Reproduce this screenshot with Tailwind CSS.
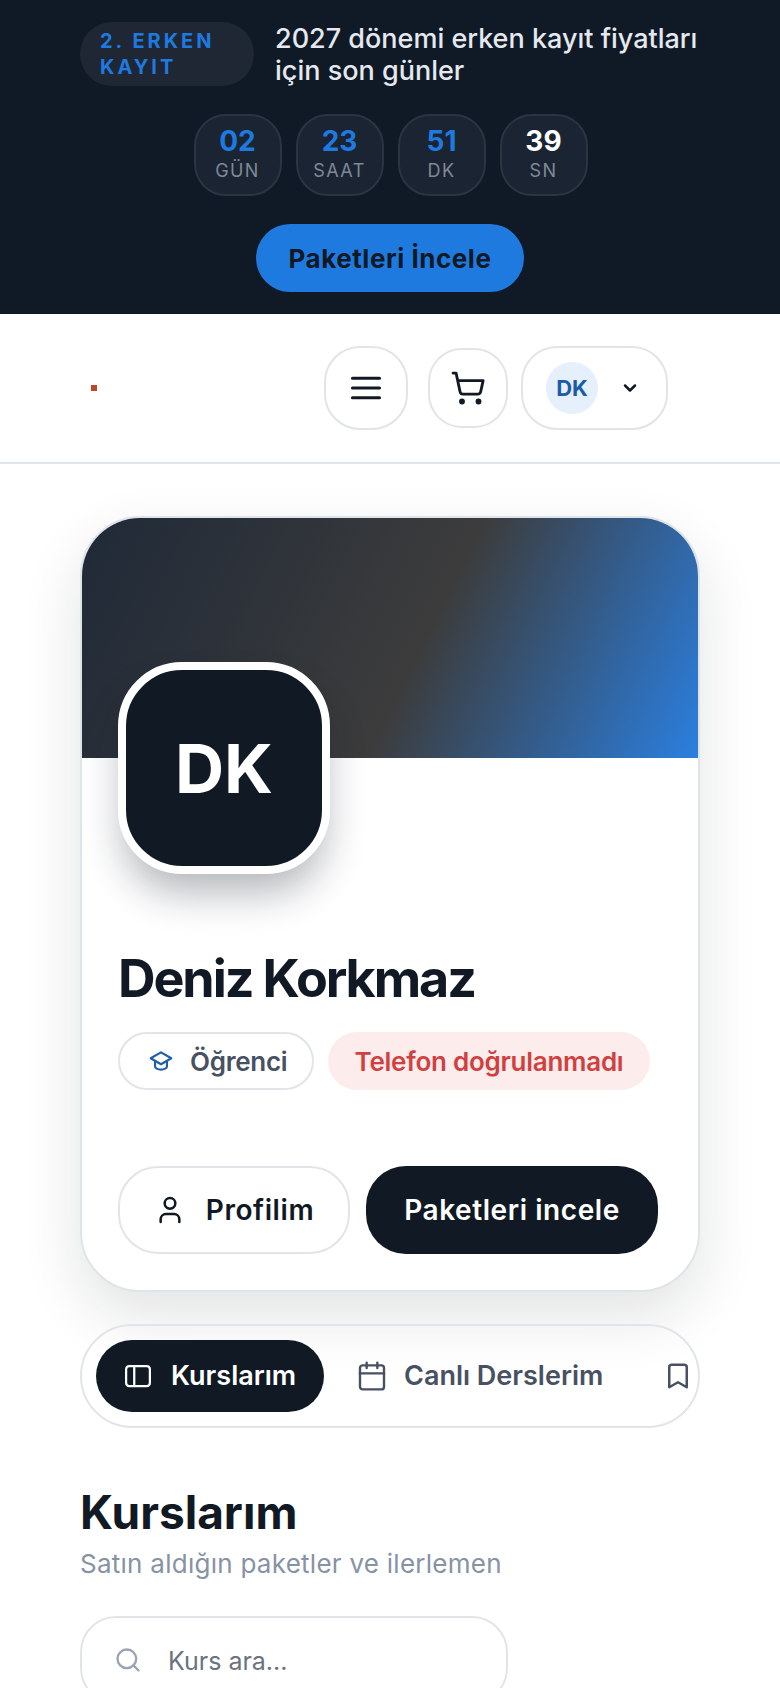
<!DOCTYPE html>
<html lang="tr">
<head>
    <meta charset="UTF-8">
    <meta name="viewport" content="width=device-width, initial-scale=1.0">
    <title>Kurslarım</title>
    <script src="https://cdn.jsdelivr.net/npm/@tailwindcss/browser@4"></script>
</head>
<body class="bg-white w-[780px] h-[1688px] overflow-hidden font-['Inter',sans-serif] text-[#101924]">
    <!-- kampanya bandi -->
    <section class="bg-[#101926] h-[314px] pt-[22px] flex flex-col items-center">
        <div class="w-[620px] h-[64px] flex items-center gap-[21px]">
            <span class="w-[174px] h-[64px] shrink-0 rounded-full bg-[#1e2733] pl-[20px] pt-[6px] text-[20px] leading-[26px] font-bold tracking-[0.15em] text-[#1f7ae0]">2. ERKEN KAYIT</span>
            <p class="mt-[2px] text-[27px] leading-[32px] font-medium text-[#e5e9ef]">2027 dönemi erken kayıt fiyatları için son günler</p>
        </div>
        <div class="flex gap-[14px] mt-[28px] ml-[1px]">
            <div class="w-[88px] h-[82px] rounded-[32px] bg-[#1a2432] border-2 border-[#2a3442] flex flex-col items-center justify-center">
                <span class="text-[28px] leading-[32px] font-bold text-[#1f7ae0]">02</span>
                <span class="text-[18px] leading-[28px] tracking-[0.08em] text-[#7f8998]">GÜN</span>
            </div>
            <div class="w-[88px] h-[82px] rounded-[32px] bg-[#1a2432] border-2 border-[#2a3442] flex flex-col items-center justify-center">
                <span class="text-[28px] leading-[32px] font-bold text-[#1f7ae0]">23</span>
                <span class="text-[18px] leading-[28px] tracking-[0.08em] text-[#7f8998]">SAAT</span>
            </div>
            <div class="w-[88px] h-[82px] rounded-[32px] bg-[#1a2432] border-2 border-[#2a3442] flex flex-col items-center justify-center">
                <span class="text-[28px] leading-[32px] font-bold text-[#1f7ae0]">51</span>
                <span class="text-[18px] leading-[28px] tracking-[0.08em] text-[#7f8998]">DK</span>
            </div>
            <div class="w-[88px] h-[82px] rounded-[32px] bg-[#1a2432] border-2 border-[#2a3442] flex flex-col items-center justify-center">
                <span class="text-[28px] leading-[32px] font-bold text-white">39</span>
                <span class="text-[18px] leading-[28px] tracking-[0.08em] text-[#7f8998]">SN</span>
            </div>
        </div>
        <button class="mt-[28px] w-[268px] h-[68px] rounded-full bg-[#1f7ae0] text-[26px] font-bold text-[#101926] tracking-[0.02em]">Paketleri İncele</button>
    </section>

    <!-- ust menu -->
    <header class="h-[150px] border-b-2 border-[#dfe6ea] flex items-center pl-[91px]">
        <span class="w-[6px] h-[6px] bg-[#c0452a] mr-[227px]"></span>
        <button class="w-[84px] h-[84px] rounded-[36px] border-2 border-[#e1e5ea] flex items-center justify-center">
            <svg class="w-[36px] h-[36px]" viewBox="0 0 24 24" fill="none" stroke="#101924" stroke-width="2.100" stroke-linecap="round"><path d="M3 5.500h18M3 12h18M3 18.500h18"/></svg>
        </button>
        <button class="w-[80px] h-[80px] ml-[20px] rounded-[34px] border-2 border-[#e1e5ea] flex items-center justify-center">
            <svg class="w-[36px] h-[36px]" viewBox="0 0 24 24" fill="none" stroke="#101924" stroke-width="1.9" stroke-linecap="round" stroke-linejoin="round"><circle cx="8" cy="21" r="1"/><circle cx="19" cy="21" r="1"/><path d="M2.050 2.050h2l2.660 12.420a2 2 0 0 0 2 1.580h9.780a2 2 0 0 0 1.950-1.570l1.650-7.430H5.120"/></svg>
        </button>
        <button class="w-[147px] h-[84px] ml-[13px] rounded-[36px] border-2 border-[#e1e5ea] flex items-center pl-[23px]">
            <span class="w-[52px] h-[52px] rounded-full bg-[#e6f0fc] flex items-center justify-center text-[22px] font-bold text-[#1a5ca8]">DK</span>
            <svg class="w-[20px] h-[20px] ml-[22px]" viewBox="0 0 24 24" fill="none" stroke="#101924" stroke-width="3" stroke-linecap="round" stroke-linejoin="round"><path d="m6 9 6 6 6-6"/></svg>
        </button>
    </header>

    <main class="px-[80px] pt-[52px]">
        <!-- profil karti -->
        <section class="h-[776px] rounded-[60px] border-2 border-[#dfe4ea] bg-white shadow-[0_24px_60px_rgba(16,25,36,0.12)] overflow-hidden">
            <div class="h-[240px] bg-[linear-gradient(116deg,#1f2937_0%,#3c3c3c_55%,#2b7fe0_100%)]"></div>
            <div class="px-[36px]">
                <div class="w-[212px] h-[212px] -mt-[96px] relative rounded-[64px] border-[8px] border-white bg-[#101924] shadow-[0_24px_40px_-6px_rgba(16,25,36,0.32)] flex items-center justify-center text-[68px] font-bold text-white">DK</div>
                <h1 class="mt-[75px] text-[52px] leading-[60px] font-bold tracking-[-0.04em]">Deniz Korkmaz</h1>
                <div class="mt-[23px] flex gap-[14px]">
                    <span class="w-[196px] h-[58px] rounded-full border-2 border-[#e1e5ea] flex items-center pl-[28px] gap-[16px] text-[26px] font-semibold tracking-[-0.01em] text-[#475162]">
                        <svg class="w-[26px] h-[26px]" viewBox="0 0 24 24" fill="none" stroke="#1f5fa8" stroke-width="2" stroke-linecap="round" stroke-linejoin="round"><path d="M12 4 2.500 9.500 12 15l9.500-5.500z"/><path d="M6.500 12v5c0 1.500 2.500 3 5.500 3s5.500-1.500 5.500-3v-5"/></svg>
                        Öğrenci
                    </span>
                    <span class="w-[322px] h-[58px] rounded-full bg-[#fdecec] flex items-center justify-center text-[26px] font-semibold text-[#d13f3f] tracking-[-0.01em]">Telefon doğrulanmadı</span>
                </div>
                <div class="mt-[76px] flex gap-[16px]">
                    <button class="w-[232px] h-[88px] rounded-[40px] border-2 border-[#e1e5ea] flex items-center justify-center gap-[20px] text-[28px] font-semibold tracking-[0.02em]">
                        <svg class="w-[32px] h-[32px]" viewBox="0 0 24 24" fill="none" stroke="#101924" stroke-width="1.900" stroke-linecap="round" stroke-linejoin="round"><path d="M19 21v-2a4 4 0 0 0-4-4H9a4 4 0 0 0-4 4v2"/><circle cx="12" cy="7" r="4"/></svg>
                        Profilim
                    </button>
                    <button class="w-[292px] h-[88px] rounded-[40px] bg-[#101924] text-[28px] font-semibold text-white tracking-[0.02em]">Paketleri incele</button>
                </div>
            </div>
        </section>

        <!-- sekmeler -->
        <nav class="mt-[32px] h-[104px] rounded-full border-2 border-[#e1e5ea] overflow-hidden flex items-center pl-[14px]">
            <button class="w-[228px] h-[72px] shrink-0 rounded-[36px] bg-[#101924] flex items-center pl-[27px] gap-[18px] text-[27px] font-semibold text-white">
                <svg class="w-[30px] h-[30px]" viewBox="0 0 24 24" fill="none" stroke="white" stroke-width="1.8" stroke-linecap="round" stroke-linejoin="round"><rect x="2.500" y="4" width="19" height="16" rx="2.500"/><path d="M9 4v16"/></svg>
                Kurslarım
            </button>
            <button class="shrink-0 ml-[32px] flex items-center gap-[16px] text-[27px] font-semibold text-[#475162]">
                <svg class="w-[32px] h-[32px]" viewBox="0 0 24 24" fill="none" stroke="#475162" stroke-width="1.8" stroke-linecap="round" stroke-linejoin="round"><path d="M8 2v4M16 2v4"/><rect x="3" y="4" width="18" height="18" rx="2"/><path d="M3 10h18"/></svg>
                Canlı Derslerim
            </button>
            <svg class="w-[30px] h-[30px] shrink-0 ml-[60px]" viewBox="0 0 24 24" fill="none" stroke="#475162" stroke-width="2" stroke-linecap="round" stroke-linejoin="round"><path d="m19 21-7-4-7 4V5a2 2 0 0 1 2-2h10a2 2 0 0 1 2 2z"/></svg>
        </nav>

        <!-- kurslar -->
        <h2 class="mt-[57px] text-[46px] leading-[54px] font-bold">Kurslarım</h2>
        <p class="mt-[8px] text-[26px] leading-[34px] tracking-[0.01em] text-[#8792a4]">Satın aldığın paketler ve ilerlemen</p>
        <div class="mt-[35px] w-[428px] h-[88px] rounded-[36px] border-2 border-[#e1e5ea] flex items-center pl-[32px] gap-[26px] text-[25px] text-[#6b7280]">
            <svg class="w-[28px] h-[28px]" viewBox="0 0 24 24" fill="none" stroke="#9aa3b0" stroke-width="2" stroke-linecap="round" stroke-linejoin="round"><path d="m21 21-4.340-4.340"/><circle cx="11" cy="11" r="8"/></svg>
            <span class="pt-[3px]">Kurs ara...</span>
        </div>
    </main>
</body>
</html>
